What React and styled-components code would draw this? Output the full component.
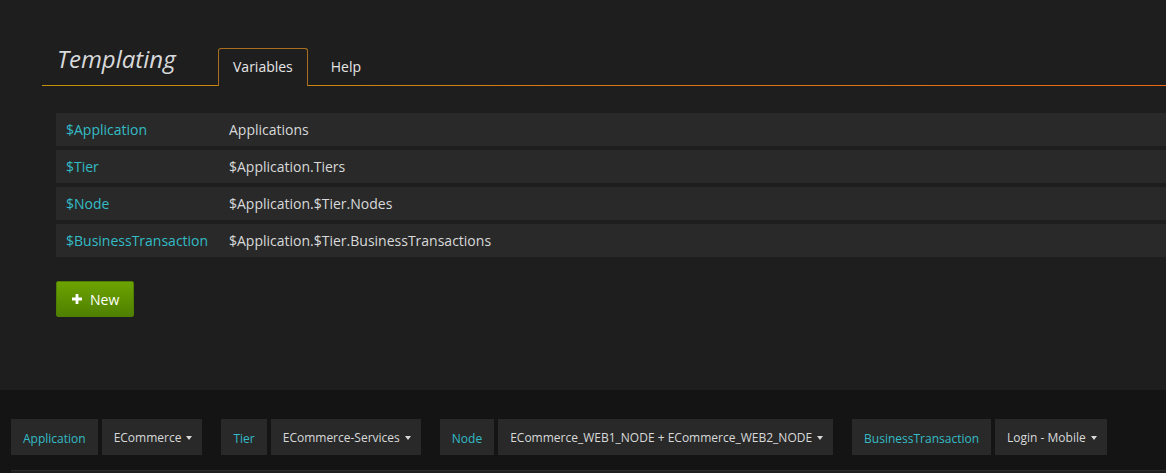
import React from "react";
import styled, { createGlobalStyle } from "styled-components";

const VARIABLES = [
    { name: "$Application", query: "Applications" },
    { name: "$Tier", query: "$Application.Tiers" },
    { name: "$Node", query: "$Application.$Tier.Nodes" },
    { name: "$BusinessTransaction", query: "$Application.$Tier.BusinessTransactions" },
];

const SUBMENU = [
    { label: "Application", value: "ECommerce" },
    { label: "Tier", value: "ECommerce-Services" },
    { label: "Node", value: "ECommerce_WEB1_NODE + ECommerce_WEB2_NODE" },
    { label: "BusinessTransaction", value: "Login - Mobile" },
];

function App() {
    return (
        <Page>
            <GlobalStyle />
            <Editor>
                <TabHeader>
                    <Title>Templating</Title>
                    <Tab $active>Variables</Tab>
                    <Tab>Help</Tab>
                </TabHeader>
                <EditorBody>
                    <VarList>
                        {VARIABLES.map((v) => (
                            <VarRow key={v.name}>
                                <VarName>{v.name}</VarName>
                                <VarQuery>{v.query}</VarQuery>
                            </VarRow>
                        ))}
                    </VarList>
                    <NewButton>
                        <PlusIcon viewBox="0 0 10 10">
                            <path d="M3.6 0h2.8v3.6H10v2.8H6.4V10H3.6V6.4H0V3.6h3.6z" fill="#fff" />
                        </PlusIcon>
                        New
                    </NewButton>
                </EditorBody>
            </Editor>
            <Submenu>
                {SUBMENU.map((s) => (
                    <SubmenuItem key={s.label}>
                        <SubLabel>{s.label}</SubLabel>
                        <SubValue>
                            {s.value}
                            <Caret />
                        </SubValue>
                    </SubmenuItem>
                ))}
            </Submenu>
            <PanelRow />
        </Page>
    );
}

export default App;

const GlobalStyle = createGlobalStyle`
    html, body {
        margin: 0;
        padding: 0;
        background: #141414;
        overflow: hidden;
    }
    body {
        font-family: "Open Sans", "Liberation Sans", sans-serif;
        color: #d8d9da;
    }
`;
const Page = styled.div`
    display: flex;
    flex-direction: column;
    width: 1166px;
    height: 473px;
    overflow: hidden;
`;
const Editor = styled.div`
    flex-shrink: 0;
    background: #1f1e1f;
    height: 390px;
    padding-top: 47px;
    box-sizing: border-box;
`;
const TabHeader = styled.div`
    display: flex;
    align-items: flex-end;
    margin-left: 42px;
    height: 38px;
    border-bottom: 1px solid;
    border-image: linear-gradient(to right, #c39009 0%, #d8791a 50%, #ea6a14 100%) 1;
`;
const Title = styled.div`
    width: 176px;
    box-sizing: border-box;
    padding: 0 0 8px 15px;
    font-size: 24px;
    font-style: italic;
    color: #d8d9da;
    line-height: 30px;
    align-self: flex-start;
    margin-top: -3px;
`;
const Tab = styled.div`
    height: 38px;
    box-sizing: border-box;
    padding: 0 14px 2px;
    margin-right: 8px;
    margin-bottom: -1px;
    display: flex;
    align-items: center;
    font-size: 14px;
    color: #e6e6e6;
    border: 1px solid ${(p) => (p.$active ? "#a8701e" : "transparent")};
    border-bottom: none;
    border-radius: 3px 3px 0 0;
    background: ${(p) => (p.$active ? "#1f1e1f" : "transparent")};
`;
const EditorBody = styled.div`
    padding: 27px 0 0 56px;
`;
const VarList = styled.div`
    display: flex;
    flex-direction: column;
    gap: 4px;
`;
const VarRow = styled.div`
    display: flex;
    align-items: center;
    height: 33px;
    background: #292929;
    font-size: 14px;
`;
const VarName = styled.div`
    width: 173px;
    box-sizing: border-box;
    padding-left: 10px;
    color: #33bcc6;
`;
const VarQuery = styled.div`
    color: #d8d9da;
`;
const NewButton = styled.button`
    margin-top: 24px;
    display: flex;
    align-items: center;
    gap: 8px;
    height: 36px;
    padding: 0 14px 0 15px;
    border: 1px solid #4f7e00;
    border-radius: 2px;
    background: linear-gradient(to bottom, #6ca300, #4f8000);
    color: #fff;
    font-family: "Open Sans", "Liberation Sans", sans-serif;
    font-size: 14px;
    font-weight: 400;
    cursor: pointer;
`;
const PlusIcon = styled.svg`
    width: 10px;
    height: 10px;
`;
const Submenu = styled.div`
    display: flex;
    gap: 19px;
    padding: 29px 11px 0;
`;
const SubmenuItem = styled.div`
    display: flex;
    flex-shrink: 0;
    gap: 4px;
`;
const SubBox = styled.div`
    height: 36px;
    box-sizing: border-box;
    display: flex;
    align-items: center;
    padding: 0 12px;
    background: #292929;
    font-size: 12px;
    white-space: nowrap;
`;
const SubLabel = styled(SubBox)`
    color: #33bcc6;
    padding: 2px 12px 0;
`;
const SubValue = styled(SubBox)`
    color: #d8d9da;
    padding-left: 12px;
    padding-right: 10px;
`;
const Caret = styled.span`
    display: inline-block;
    margin-left: 5px;
    margin-top: 1px;
    border-left: 3px solid transparent;
    border-right: 3px solid transparent;
    border-top: 4px solid #d8d9da;
`;
const PanelRow = styled.div`
    margin: 15px 0 0 11px;
    height: 20px;
    background: #1f1f1f;
    border-top: 1px solid #2b2b2b;
`;
